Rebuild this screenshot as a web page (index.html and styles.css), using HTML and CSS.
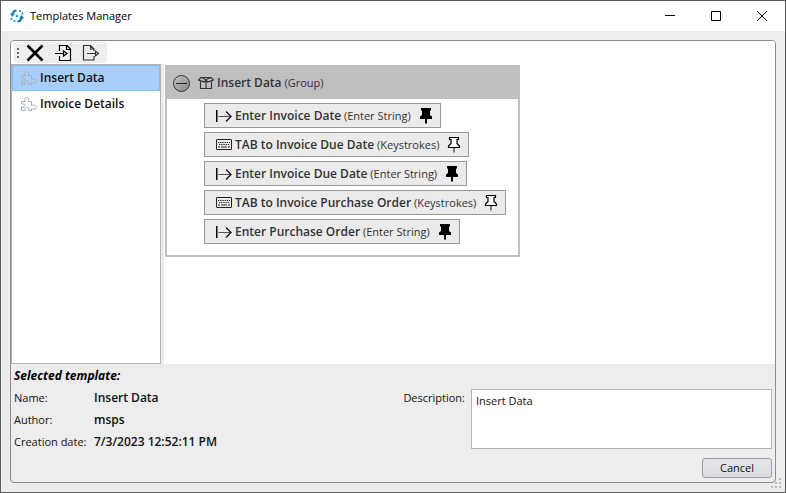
FILE: index.html
```html
<!DOCTYPE html>
<html lang="en">
<head>
  <meta charset="UTF-8">
  <meta name="viewport" content="width=device-width, initial-scale=1.0">
  <title>Templates Manager</title>
  <link rel="stylesheet" href="styles.css">
</head>
<body>

  <!-- Shared icons -->
  <svg class="sprite" aria-hidden="true">
    <symbol id="puzzle" viewBox="0 0 16 14">
      <path d="M.5 4.500h3.500V3c-.8-1.500.5-2.500 1.800-2.500S8.400 1.500 7.500 3v1.500h3v4c1.200-1 2-.5 2-.1h1.500c2 .2 2 3.400 0 3.600h-1.500l-2-.3v1.800H7.500v-1.500c.8-2.800-4.300-2.800-3.500 0v1.500H.5V10h1.700c2-.3 2-3 0-3H.5z" fill="none" stroke="currentColor"/>
    </symbol>
    <symbol id="enter" viewBox="0 0 16 14">
      <path d="M.75 1v12" fill="none" stroke="#000" stroke-width="1.500"/>
      <path d="M2.500 7.500h12.500" fill="none" stroke="#555"/>
      <path d="M10 2.500l5 5-5 5" fill="none" stroke="#111" stroke-width="1.300"/>
    </symbol>
    <symbol id="keyboard" viewBox="0 0 16 14">
      <rect x=".5" y="1.500" width="15" height="10" rx=".5" fill="none" stroke="#222"/>
      <path d="M2 4.500h12M3 6.500h11" stroke="#222" stroke-dasharray="1.300 .9"/>
      <path d="M2 9h2m1 0h6m1 0h2" stroke="#222"/>
    </symbol>
    <symbol id="pin" viewBox="0 0 14 16">
      <path d="M2 0h10v2.500h-1V7l2 1.500V11H1V8.500L3 7V2.500H2z"/>
      <path d="M6 11h2v4l-1 1-1-1z"/>
    </symbol>
    <symbol id="pin-open" viewBox="0 0 14 16">
      <path d="M2.500.5h9v2h-1.500v4l2.500 2.500v1.500h-11V9L4 6.500v-4H2.500z" fill="#fff" stroke="#000" stroke-width="1.200"/>
      <path d="M7 11v4.500" stroke="#444" stroke-width="1.300"/>
    </symbol>
  </svg>

  <div class="window">
    <header class="titlebar">
      <svg class="logo" viewBox="0 0 14 14">
        <path d="M6.500 1.500C4.500 1.500 3 2.500 2.300 5" fill="none" stroke="#1684b5" stroke-width="2"/>
        <path d="M0 4.500h5L2.400 8z" fill="#1684b5"/>
        <path d="M7.500 12.500c2 0 3.500-1 4.200-3.500" fill="none" stroke="#15719b" stroke-width="2"/>
        <path d="M14 9.500H9L11.600 6z" fill="#15719b"/>
        <path d="M9 1h2v2H9zM11.500 3.500h2v2h-2zM.5 9h2v2h-2zM3.500 11h2v2h-2z" fill="#29abe2"/>
        <circle cx="7" cy="7" r="1.300" fill="#29abe2"/>
      </svg>
      <h1 class="title">Templates Manager</h1>
      <button class="win-btn" aria-label="Minimize">
        <svg viewBox="0 0 10 10"><path d="M0 4.500h10"/></svg>
      </button>
      <button class="win-btn" aria-label="Maximize">
        <svg viewBox="0 0 10 10"><path d="M.5.500h9v9h-9z"/></svg>
      </button>
      <button class="win-btn" aria-label="Close">
        <svg viewBox="0 0 10 10"><path d="M0 0l10 10M10 0L0 10"/></svg>
      </button>
    </header>

    <main class="frame">
      <div class="toolbar-row">
        <div class="toolbar">
          <span class="grip"></span>
          <button class="tool" aria-label="Delete">
            <svg viewBox="0 0 18 18"><path d="M1.500 1.500l15 15M16.500 1.500l-15 15" stroke="#000" stroke-width="2.600"/></svg>
          </button>
          <button class="tool" aria-label="Import">
            <svg viewBox="0 0 18 18">
              <path d="M5.500 7V1.500h7.500l3.500 3.500v11.500h-11V12M12.500 1.500V5.500h4M1 9.500h9" stroke="#000" stroke-width="1.200"/>
              <path d="M9.500 7l3.500 2.500-3.500 2.500z" fill="#eee" stroke="#000" stroke-width="1.200"/>
            </svg>
          </button>
          <button class="tool" aria-label="Export">
            <svg viewBox="0 0 18 18">
              <path d="M12 7V5L8.500 1.500H1.500v14.500H12V12M8.500 1.500v3.500h3.500M5 9.500h8" stroke="#333" stroke-width="1.200"/>
              <path d="M13.500 7.200l3 2.300-3 2.300z" fill="#eee" stroke="#333" stroke-width="1.200"/>
            </svg>
          </button>
        </div>
      </div>

      <div class="content">
        <ul class="template-list">
          <li><button class="template selected"><svg><use href="#puzzle"/></svg>Insert Data</button></li>
          <li><button class="template"><svg><use href="#puzzle"/></svg>Invoice Details</button></li>
        </ul>

        <section class="canvas">
          <div class="group">
            <div class="group-header">
              <button class="collapse" aria-label="Collapse group"></button>
              <svg class="box-icon" viewBox="0 0 16 14">
                <path d="M2.500 5.500v7h11v-7M8 3.500v9M3 1.500l5 2-1.500 2.500L.5 4zM13 1.500l-5 2 1.500 2.500L15.500 4zM3 1.500h10" fill="none" stroke="#333" stroke-width="1.100"/>
              </svg>
              <span><b>Insert Data</b> (Group)</span>
            </div>
            <div class="steps">
              <div class="step">
                <svg class="step-icon"><use href="#enter"/></svg>
                <span><b>Enter Invoice Date</b> (Enter String)</span>
                <button class="pin" aria-label="Unpin"><svg><use href="#pin"/></svg></button>
              </div>
              <div class="step">
                <svg class="step-icon"><use href="#keyboard"/></svg>
                <span><b>TAB to Invoice Due Date</b> (Keystrokes)</span>
                <button class="pin" aria-label="Pin"><svg><use href="#pin-open"/></svg></button>
              </div>
              <div class="step">
                <svg class="step-icon"><use href="#enter"/></svg>
                <span><b>Enter Invoice Due Date</b> (Enter String)</span>
                <button class="pin" aria-label="Unpin"><svg><use href="#pin"/></svg></button>
              </div>
              <div class="step">
                <svg class="step-icon"><use href="#keyboard"/></svg>
                <span><b>TAB to Invoice Purchase Order</b> (Keystrokes)</span>
                <button class="pin" aria-label="Pin"><svg><use href="#pin-open"/></svg></button>
              </div>
              <div class="step">
                <svg class="step-icon"><use href="#enter"/></svg>
                <span><b>Enter Purchase Order</b> (Enter String)</span>
                <button class="pin" aria-label="Unpin"><svg><use href="#pin"/></svg></button>
              </div>
            </div>
          </div>
        </section>
      </div>

      <footer class="details">
        <h2 class="details-title">Selected template:</h2>
        <div class="details-body">
          <dl class="info">
            <dt>Name:</dt><dd>Insert Data</dd>
            <dt>Author:</dt><dd>msps</dd>
            <dt>Creation date:</dt><dd>7/3/2023 12:52:11 PM</dd>
          </dl>
          <div class="description">
            <label for="description">Description:</label>
            <textarea id="description">Insert Data</textarea>
          </div>
        </div>
        <button class="cancel">Cancel</button>
      </footer>
    </main>

    <!-- Resize handle -->
    <svg class="resize" viewBox="0 0 12 12">
      <path d="M9 1h2v2H9zM5 5h2v2H5zM9 5h2v2H9zM1 9h2v2H1zM5 9h2v2H5zM9 9h2v2H9z" fill="#bcbcbc"/>
    </svg>
  </div>

</body>
</html>
```
FILE: styles.css
```css
* {
  box-sizing: border-box;
}
body {
  margin: 0;
  font-family: "Open Sans", "Noto Sans", sans-serif;
  font-size: 11px;
  line-height: 16px;
  color: #111;
}
button, textarea {
  font: inherit;
  color: inherit;
}
button {
  padding: 0;
  border: none;
  background: none;
}
b {
  font-size: 12px;
  font-weight: 600;
}
.sprite {
  display: none;
}
.window {
  position: relative;
  display: flex;
  flex-direction: column;
  height: 100vh;
  border: 1px solid #5c5c5c;
  background-color: #ededed;
}

/* Title bar */
.titlebar {
  display: flex;
  align-items: center;
  height: 30px;
  padding-left: 9px;
  background-color: #fff;
}
.logo {
  width: 14px;
  height: 14px;
  margin-right: 6px;
}
.title {
  flex: 1;
  margin: 0;
  font-size: 11px;
  font-weight: 400;
  color: #000;
}
.win-btn {
  display: flex;
  align-items: center;
  justify-content: center;
  width: 46px;
  height: 30px;
}
.win-btn svg {
  width: 10px;
  height: 10px;
  fill: none;
  stroke: #000;
}

/* Main frame */
.frame {
  flex: 1;
  display: flex;
  flex-direction: column;
  min-height: 0;
  margin: 9px;
  border: 1px solid #8c8c8c;
  border-radius: 4px;
  overflow: hidden;
}
.toolbar-row {
  padding: 1px 3px;
  background-color: #fff;
}
.toolbar {
  display: flex;
  align-items: center;
  width: fit-content;
  height: 21px;
  padding: 0 7px 0 3px;
  border-radius: 3px;
  background-color: #eee;
}
.grip {
  width: 2px;
  height: 10px;
  margin-right: 7px;
  background: repeating-linear-gradient(#666 0 2px, transparent 2px 4px);
}
.tool {
  width: 18px;
  height: 18px;
  margin-right: 10px;
}
.tool:last-child {
  margin-right: 0;
}
.tool svg {
  display: block;
  width: 18px;
  height: 18px;
  fill: none;
}

/* Template list and preview */
.content {
  flex: 1;
  display: flex;
  gap: 3px;
  min-height: 0;
}
.template-list {
  width: 150px;
  margin: 0;
  padding: 0;
  border: 1px solid #b4b4b4;
  background-color: #fff;
  list-style: none;
}
.template {
  display: flex;
  align-items: center;
  gap: 3px;
  width: 100%;
  height: 26px;
  padding: 0 8px;
  border: 1px solid transparent;
  font-size: 12px;
  font-weight: 600;
}
.template.selected {
  border-color: #85bdf2;
  background-color: #a8cffa;
}
.template svg {
  width: 16px;
  height: 14px;
  color: #a4afc0;
}
.canvas {
  flex: 1;
  padding: 1px;
  background-color: #fff;
}
.group {
  width: fit-content;
  border: 2px solid #bfbfbf;
  color: #333;
}
.group-header {
  display: flex;
  align-items: center;
  height: 32px;
  padding-left: 6px;
  background-color: #bfbfbf;
}
.collapse {
  width: 17px;
  height: 17px;
  margin-right: 8px;
  border: 1px solid #333;
  border-radius: 50%;
  background: linear-gradient(#222, #222) center / 11px 1px no-repeat, linear-gradient(135deg, #c4c4c4, #858585);
}
.box-icon {
  width: 16px;
  height: 14px;
  margin-right: 3px;
}
.steps {
  display: flex;
  flex-direction: column;
  align-items: flex-start;
  gap: 4px;
  padding: 4px 12px 11px 37px;
}
.step {
  display: flex;
  align-items: center;
  height: 25px;
  padding: 0 7px 0 11px;
  border: 1px solid #999;
  background-color: #ebebeb;
}
.step-icon {
  width: 16px;
  height: 14px;
  margin-right: 3px;
}
.pin {
  margin-left: 8px;
}
.pin svg {
  display: block;
  width: 14px;
  height: 16px;
}

/* Details of the selected template */
.details {
  display: flex;
  flex-direction: column;
  padding: 4px 3px;
}
.details-title {
  margin: 0;
  font-size: 12px;
  font-weight: 700;
  font-style: italic;
  color: #000;
}
.details-body {
  display: grid;
  grid-template-columns: 1fr 1fr;
  gap: 8px;
  padding-top: 5px;
}
.info {
  display: grid;
  grid-template-columns: 80px 1fr;
  row-gap: 6px;
  margin: 0;
  padding-top: 1px;
}
.info dd {
  margin: 0;
  font-size: 12px;
  font-weight: 600;
}
.description {
  display: flex;
  gap: 6px;
  justify-content: flex-end;
}
.description label {
  padding-top: 1px;
}
.description textarea {
  flex: 0 0 301px;
  height: 60px;
  padding: 3px 4px;
  border: 1px solid #b4b4b4;
  background-color: #fff;
  resize: none;
  outline: none;
}
.cancel {
  align-self: flex-end;
  width: 70px;
  height: 20px;
  margin-top: 8px;
  border: 1px solid #9a9da3;
  border-radius: 3px;
  background: linear-gradient(#e4e5e8, #dcdee2);
}
.resize {
  position: absolute;
  right: 3px;
  bottom: 3px;
  width: 12px;
  height: 12px;
}
```
